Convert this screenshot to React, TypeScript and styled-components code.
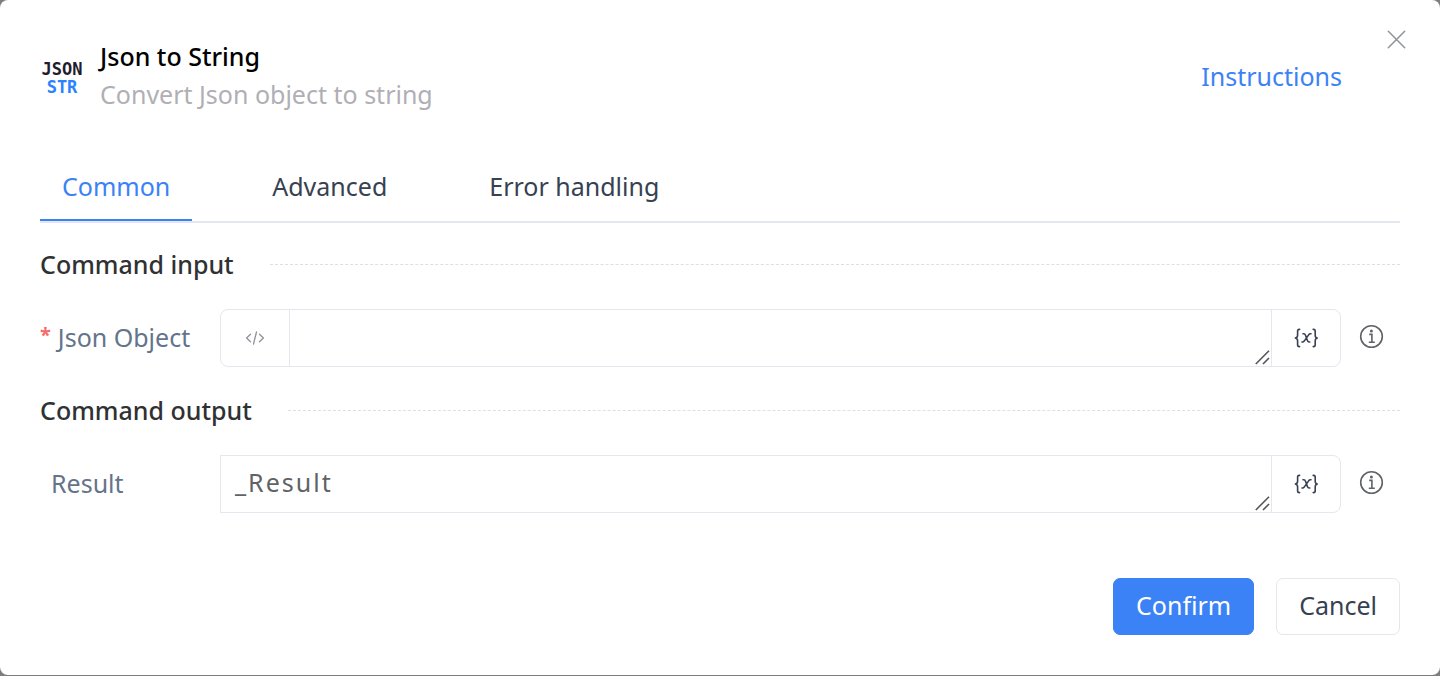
import React from 'react';
import styled, { createGlobalStyle, css } from 'styled-components';

const GlobalStyle = createGlobalStyle`
  * { box-sizing: border-box; }
  body {
    margin: 0;
    background: #7d7d7d;
    font-family: 'Noto Sans', 'Open Sans', sans-serif;
    font-size: 25px;
    line-height: 38px;
  }
  button, textarea { font: inherit; }
`;

const Dialog = styled.div`
  display: flex;
  flex-direction: column;
  padding: 37px 40px 40px;
  border-radius: 8px;
  background: #fff;
`;

const Header = styled.header`
  display: flex;
  align-items: center;
  position: relative;
`;

const Logo = styled.svg`
  flex: none;
  width: 44px;
  height: 44px;
  margin-right: 16px;
  font-family: 'DejaVu Sans Mono', monospace;
  font-size: 17px;
  font-weight: 700;
  text-anchor: middle;
`;

const Titles = styled.div`
  flex: 1;
  padding-bottom: 2px;
`;

const Title = styled.h1`
  margin: 0;
  font-size: 25px;
  font-weight: 500;
  color: #000;
`;

const Subtitle = styled.p`
  margin: 0;
  color: #b0afb5;
`;

const HelpLink = styled.a`
  margin-right: 58px;
  color: #3b82f6;
  text-decoration: none;
`;

const CloseButton = styled.button`
  display: flex;
  position: absolute;
  top: -7px;
  right: -6px;
  padding: 0;
  border: 0;
  background: none;
  color: #909399;
  cursor: pointer;
`;

const Tabs = styled.div`
  display: flex;
  gap: 58px;
  margin-top: 43px;
  border-bottom: 2px solid #e4e7ed;
`;

const Tab = styled.button<{ $active?: boolean }>`
  padding: 9px 22px 14px;
  border: 0;
  border-bottom: 2px solid ${(p) => (p.$active ? '#3b82f6' : 'transparent')};
  background: none;
  color: ${(p) => (p.$active ? '#3b82f6' : '#374151')};
  cursor: pointer;
`;

const SectionTitle = styled.h2`
  display: flex;
  align-items: center;
  gap: 36px;
  margin: 22px 0 26px;
  font-size: 25px;
  font-weight: 500;
  color: #303133;

  &::after {
    content: '';
    flex: 1;
    border-top: 1px dashed #dcdfe6;
  }
`;

const Row = styled.div`
  display: flex;
  align-items: center;
  margin-bottom: 2px;
`;

const Label = styled.label`
  flex: none;
  width: 180px;
  padding: 0 0 2px 11px;
  color: #64748b;
`;

const RequiredLabel = styled(Label)`
  padding-left: 0;

  &::before {
    content: '*';
    margin-right: 7px;
    color: #f56c6c;
    font-size: 20px;
    font-weight: 700;
    line-height: 20px;
    vertical-align: 5px;
  }
`;

const Field = styled.div<{ $squareStart?: boolean }>`
  display: flex;
  flex: 1;
  height: 58px;
  border: 1px solid #e4e7ed;
  border-radius: ${(p) => (p.$squareStart ? '0 8px 8px 0' : '8px')};
`;

const addon = css`
  display: flex;
  flex: none;
  align-items: center;
  justify-content: center;
  width: 69px;
  padding: 0;
  border: 0;
  background: none;
  cursor: pointer;
`;

const CodeButton = styled.button`
  ${addon}
  border-right: 1px solid #e4e7ed;
  color: #909399;
`;

const VariableButton = styled.button`
  ${addon}
  border-left: 1px solid #e4e7ed;
  color: #374151;
`;

const InputArea = styled.div`
  display: flex;
  flex: 1;
  position: relative;
`;

const TextInput = styled.textarea`
  flex: 1;
  min-width: 0;
  padding: 7px 14px;
  border: 0;
  outline: 0;
  background: none;
  color: #606266;
  letter-spacing: 2px;
  resize: none;
  overflow: hidden;
`;

const Grip = styled.svg`
  position: absolute;
  right: 1px;
  bottom: 1px;
  color: #555;
  pointer-events: none;
`;

const InfoButton = styled.button`
  display: flex;
  flex: none;
  margin: 0 16px 0 18px;
  padding: 0 0 3px;
  border: 0;
  background: none;
  color: #606266;
  cursor: pointer;
`;

const Footer = styled.footer`
  display: flex;
  justify-content: flex-end;
  gap: 22px;
  margin-top: 63px;
`;

const Button = styled.button<{ $primary?: boolean }>`
  height: 57px;
  padding: 0 22px 3px;
  border: 1px solid ${(p) => (p.$primary ? '#3b82f6' : '#e4e7ed')};
  border-radius: 7px;
  background: ${(p) => (p.$primary ? '#3b82f6' : '#fff')};
  color: ${(p) => (p.$primary ? '#fff' : '#374151')};
  cursor: pointer;
`;

const CloseIcon = () => (
  <svg width="19" height="19" viewBox="0 0 19 19" fill="none" stroke="currentColor" strokeWidth="1.5" strokeLinecap="round">
    <path d="M1.3 1.3 17.7 17.7M17.7 1.3 1.3 17.7" />
  </svg>
);

const CodeIcon = () => (
  <svg width="20" height="16" viewBox="0 0 20 16" fill="none" stroke="currentColor" strokeWidth="1.3" strokeLinecap="round" strokeLinejoin="round">
    <path d="M5.5 4.2 1.6 8l3.9 3.8M14.5 4.2 18.4 8l-3.9 3.8M11.5 2 8.5 14" />
  </svg>
);

const VariableIcon = () => (
  <svg width="24" height="20" viewBox="0 0 24 20" fill="none" stroke="currentColor" strokeWidth="1.6" strokeLinecap="round" strokeLinejoin="round">
    <path d="M5.6 1.4H5.2Q3.6 1.4 3.6 3.2V7.2Q3.6 9.6 1.4 10 3.6 10.4 3.6 12.8V16.8Q3.6 18.6 5.2 18.6H5.6" />
    <path d="M19.2 1.4h.4Q21.2 1.4 21.2 3.2V7.2Q21.2 9.6 23.2 10 21.2 10.4 21.2 12.8V16.8Q21.2 18.6 19.6 18.6H19.2" />
    <path d="M9 5.8H9.9Q11 5.8 11.4 7L13.5 12.8Q13.9 14 15.2 14H15.8M17 5.8H16.2Q15.5 5.8 14.8 6.6L10.2 13.1Q9.5 14 8.6 14H8" />
  </svg>
);

const InfoIcon = () => (
  <svg width="25" height="25" viewBox="0 0 25 25" fill="none" stroke="currentColor" strokeWidth="1.6">
    <circle cx="12.5" cy="12.5" r="10.8" />
    <circle cx="12.4" cy="6.9" r="1.5" fill="currentColor" stroke="none" />
    <path d="M10.2 10.4H12.9V18M9.8 18.2H15.8" />
  </svg>
);

const ResizeGrip = () => (
  <Grip width="15" height="15" viewBox="0 0 15 15" fill="none" stroke="currentColor" strokeWidth="1.6" aria-hidden="true">
    <path d="M0.8 14 14 0.8M8 14 14 8" />
  </Grip>
);

interface FieldRowProps {
  id: string;
  label: string;
  value?: string;
  required?: boolean;
  code?: boolean;
}

function FieldRow({ id, label, value, required, code }: FieldRowProps) {
  const LabelPart = required ? RequiredLabel : Label;
  return (
    <Row>
      <LabelPart htmlFor={id}>{label}</LabelPart>
      <Field $squareStart={!code}>
        {code && (
          <CodeButton type="button" aria-label="Expression">
            <CodeIcon />
          </CodeButton>
        )}
        <InputArea>
          <TextInput id={id} rows={1} defaultValue={value} required={required} spellCheck={false} />
          <ResizeGrip />
        </InputArea>
        <VariableButton type="button" aria-label="Insert variable">
          <VariableIcon />
        </VariableButton>
      </Field>
      <InfoButton type="button" aria-label={`About ${label}`}>
        <InfoIcon />
      </InfoButton>
    </Row>
  );
}

export default function App() {
  return (
    <>
      <GlobalStyle />
      <Dialog role="dialog" aria-labelledby="dialog-title">
        <Header>
          <Logo viewBox="0 0 44 44" aria-hidden="true">
            <text x="22" y="21" fill="#1f1d2e">JSON</text>
            <text x="22" y="39" fill="#2a82ff">STR</text>
          </Logo>
          <Titles>
            <Title id="dialog-title">Json to String</Title>
            <Subtitle>Convert Json object to string</Subtitle>
          </Titles>
          <HelpLink href="#instructions">Instructions</HelpLink>
          <CloseButton type="button" aria-label="Close">
            <CloseIcon />
          </CloseButton>
        </Header>
        <Tabs role="tablist">
          <Tab type="button" role="tab" aria-selected $active>Common</Tab>
          <Tab type="button" role="tab" aria-selected={false}>Advanced</Tab>
          <Tab type="button" role="tab" aria-selected={false}>Error handling</Tab>
        </Tabs>
        <SectionTitle>Command input</SectionTitle>
        <FieldRow id="json-object" label="Json Object" required code />
        <SectionTitle>Command output</SectionTitle>
        <FieldRow id="result" label="Result" value="_Result" />
        <Footer>
          <Button type="button" $primary>Confirm</Button>
          <Button type="button">Cancel</Button>
        </Footer>
      </Dialog>
    </>
  );
}
